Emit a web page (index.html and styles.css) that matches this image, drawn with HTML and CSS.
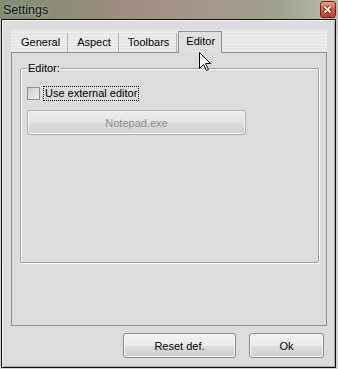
FILE: index.html
```html
<!DOCTYPE html>
<html>
<head>
    <meta charset="UTF-8">
    <title>Settings</title>
    <link rel="stylesheet" href="styles.css">
</head>
<body>
    <div class="titlebar">
        <span class="title">Settings</span>
        <!-- close button of the window -->
        <span class="close">
            <svg width="15" height="16" viewBox="0 0 15 16">
                <path d="M4.5 5.5 L10.5 11.5 M10.5 5.5 L4.5 11.5" stroke="#5a1a10" stroke-width="3.4"/>
                <path d="M4.5 5.5 L10.5 11.5 M10.5 5.5 L4.5 11.5" stroke="#ffffff" stroke-width="1.8"/>
            </svg>
        </span>
    </div>
    <div class="frame">
        <div class="tabs">
            <div class="tabstrip">
                <span class="tab">General</span>
                <span class="tab">Aspect</span>
                <span class="tab">Toolbars</span>
                <span class="tab active">Editor</span>
            </div>
            <div class="pane">
                <fieldset class="group">
                    <legend>Editor:</legend>
                    <div class="check-row">
                        <span class="checkbox"></span>
                        <span class="focus">Use external editor</span>
                    </div>
                    <button type="button" class="btn wide" disabled>Notepad.exe</button>
                </fieldset>
            </div>
        </div>
        <div class="actions">
            <button type="button" class="btn reset">Reset def.</button>
            <button type="button" class="btn ok">Ok</button>
        </div>
    </div>
    <!-- mouse pointer over the Editor tab -->
    <svg class="cursor" width="13" height="20" viewBox="0 0 13 20">
        <path d="M0.5 0.5 L0.5 16.5 L4.5 12.5 L7.5 18.5 L9.5 17.5 L6.5 11.5 L11.5 11.5 Z" fill="#ffffff" stroke="#000000" stroke-width="1"/>
    </svg>
</body>
</html>
```

FILE: styles.css
```css
body {
    margin: 0;
    width: 338px;
    height: 369px;
    overflow: hidden;
    position: relative;
    background: linear-gradient(to bottom, #b9b6ad, #cfcfcf 40px, #d2d2d2);
    font-family: "Liberation Sans", Arial, sans-serif;
    font-size: 11px;
    color: #000000;
}
.titlebar {
    height: 19px;
    display: flex;
    justify-content: space-between;
    align-items: flex-start;
    background: linear-gradient(to right, #7f8c70, #8f8c78 20%, #a18d82 40%, #a6968c 60%, #a0a08e 82%, #b9bcae);
}
.title {
    font-size: 12.5px;
    margin: 3px 0 0 3px;
    color: #101010;
    text-shadow: 0 0 4px rgba(255, 255, 255, 0.5);
}
.close {
    width: 16px;
    height: 17px;
    margin: 1px 2px 0 0;
    border: 1px solid #6c2a1e;
    border-radius: 3px;
    box-sizing: border-box;
    background: linear-gradient(to bottom, #ee9c86, #d9583c 50%, #c83e22);
    display: flex;
}
.close svg {
    margin: -1px 0 0 -1px;
}
.frame {
    margin-left: 1px;
    width: 335px;
    height: 349px;
    box-sizing: border-box;
    border: 1px solid #111111;
    box-shadow: inset 1px 1px 0 #f4f4f4, inset -1px -1px 0 #a8a8a8;
    background: #dcdcdc;
    padding: 10px 8px 0 9px;
    display: flex;
    flex-direction: column;
}
.tabs {
    display: flex;
    flex-direction: column;
}
.tabstrip {
    height: 22px;
    display: flex;
    align-items: flex-end;
    padding-left: 1px;
    background: repeating-linear-gradient(to bottom, #e6e6e6 0px, #e6e6e6 2px, #f0f0f0 2px, #f0f0f0 3px);
}
.tab {
    height: 19px;
    line-height: 19px;
    padding: 0 7px 0 9px;
    border-right: 1px solid #b4b4b4;
}
.tab.active {
    height: 21px;
    line-height: 18px;
    padding: 0 6px 0 7px;
    margin-left: 1px;
    margin-bottom: -1px;
    border: 1px solid #8e9096;
    border-bottom: none;
    background: #dfdfdf;
    position: relative;
}
.pane {
    height: 274px;
    box-sizing: border-box;
    border: 1px solid #8e9096;
    background: #dcdcdc;
    padding: 9px 7px 0 8px;
}
.group {
    margin: 0;
    height: 201px;
    box-sizing: border-box;
    padding: 11px 6px 0 6px;
    border: 1px solid #a0a0a0;
    border-radius: 2px;
    box-shadow: inset 1px 1px 0 #ffffff, 1px 1px 0 #ffffff;
    display: flex;
    flex-direction: column;
    align-items: flex-start;
}
.group legend {
    padding: 0 1px;
    line-height: 13px;
    background: #dcdcdc;
}
.check-row {
    display: flex;
    align-items: center;
    gap: 3px;
}
.checkbox {
    width: 13px;
    height: 13px;
    box-sizing: border-box;
    border: 1px solid #8f8f8f;
    background: linear-gradient(to bottom right, #cfcfcf, #ececec);
}
.focus {
    border: 1px dotted #000000;
    padding: 0 1px;
    line-height: 13px;
}
.btn {
    font-family: "Liberation Sans", Arial, sans-serif;
    font-size: 11px;
    color: #000000;
    height: 25px;
    border: 1px solid #8a8a8a;
    border-radius: 3px;
    background: linear-gradient(to bottom, #f2f2f2, #ebebeb 50%, #dddddd 51%, #cfcfcf);
    box-shadow: inset 0 0 0 1px #f6f6f6;
    padding: 0;
}
.btn.wide {
    width: 219px;
    margin-top: 9px;
    color: #8d8d8d;
    border-color: #adadad;
    background: linear-gradient(to bottom, #ececec, #e3e3e3 50%, #dadada 51%, #d4d4d4);
}
.actions {
    display: flex;
    justify-content: flex-end;
    gap: 13px;
    margin-top: 7px;
    padding-right: 3px;
}
.reset {
    width: 113px;
}
.ok {
    width: 75px;
}
.cursor {
    position: absolute;
    left: 199px;
    top: 52px;
}
```
